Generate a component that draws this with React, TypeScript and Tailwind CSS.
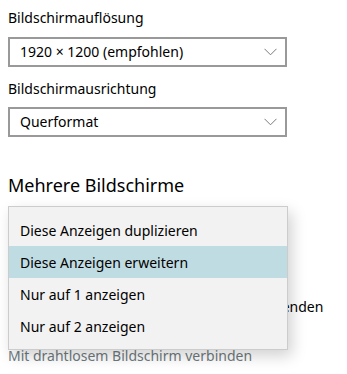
import React from "react";

const font = { fontFamily: '"Noto Sans", "Open Sans", sans-serif' };

function Chevron() {
    return (
        <svg width="13" height="8" viewBox="0 0 13 8" className="shrink-0">
            <path d="M0.5 0.8 L6.5 6.8 L12.5 0.8" fill="none" stroke="#7a7a7a" strokeWidth="1" />
        </svg>
    );
}

function Select({ value }: { value: string }) {
    return (
        <div className="flex items-center justify-between h-[30px] w-[279px] border-2 border-[#999999] bg-white pl-[10px] pr-[8px]">
            <span className="text-[14px] text-black leading-none">{value}</span>
            <Chevron />
        </div>
    );
}

const OPTIONS = [
    "Diese Anzeigen duplizieren",
    "Diese Anzeigen erweitern",
    "Nur auf 1 anzeigen",
    "Nur auf 2 anzeigen",
];

export default function App() {
    return (
        <div className="relative w-[347px] h-[374px] bg-white overflow-hidden pl-[8px]" style={font}>
            {/* Resolution */}
            <div className="pt-[8px] h-[28px] text-[14px] leading-[20px] text-black">Bildschirmauflösung</div>
            <div className="mt-[9px]">
                <Select value="1920 × 1200 (empfohlen)" />
            </div>

            {/* Orientation */}
            <div className="mt-[12px] h-[20px] text-[14px] leading-[20px] text-black">Bildschirmausrichtung</div>
            <div className="mt-[8px]">
                <Select value="Querformat" />
            </div>

            {/* Multiple displays */}
            <div className="mt-[36px] text-[18px] leading-[24px] text-black">Mehrere Bildschirme</div>
            <div className="mt-[100px] ml-[3px] text-[14px] leading-[20px] text-black whitespace-nowrap">
                Diesen Bildschirm als Hauptanzeige verwenden
            </div>
            <div className="mt-[29px] text-[14px] leading-[20px] text-[#6f7a7e] whitespace-nowrap">
                Mit drahtlosem Bildschirm verbinden
            </div>

            {/* Open dropdown menu */}
            <div className="absolute left-[8px] top-[206px] w-[280px] border border-[#cccccc] bg-[#f2f2f2] py-[7px] shadow-[4px_6px_14px_rgba(0,0,0,0.18)]">
                {OPTIONS.map((o, i) => (
                    <div
                        key={o}
                        className={`h-[32px] flex items-center pl-[11px] text-[14px] text-black ${i === 1 ? "bg-[#c0dce3]" : ""}`}
                    >
                        {o}
                    </div>
                ))}
            </div>
        </div>
    );
}
